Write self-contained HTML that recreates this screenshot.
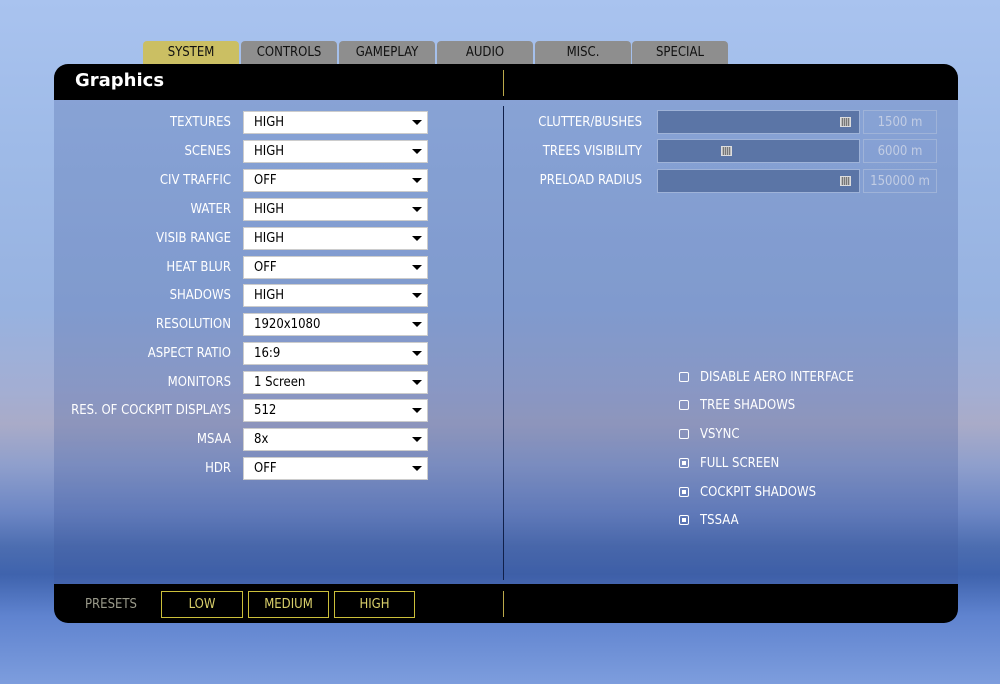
<!DOCTYPE html>
<html><head><meta charset="utf-8"><style>
*{margin:0;padding:0;box-sizing:border-box}
body{width:1000px;height:684px;overflow:hidden;position:relative;font-family:"DejaVu Sans Condensed","DejaVu Sans","Liberation Sans",sans-serif;font-stretch:condensed;font-size:13px;
background:linear-gradient(180deg,#a9c3ef 0%,#9fbbe8 20%,#97b2e0 45%,#a3aed3 57%,#a9abc8 62%,#8f9fcc 68%,#6c86c4 75%,#4c6db0 80%,#3f63ad 84%,#5f83cf 90%,#7d9ddd 100%)}
.tab{position:absolute;top:41px;height:23px;width:96px;background:#8e8e8e;border-radius:4px 4px 0 0;text-align:center;line-height:23px;color:#111;font-size:13px}
.tab.on{background:#cbbf63}
#panel{position:absolute;left:54px;top:64px;width:904px;height:559px;border-radius:14px;overflow:hidden}
.hdr{position:absolute;left:0;top:0;width:904px;height:36px;background:#000}
.ftr{position:absolute;left:0;top:520px;width:904px;height:39px;background:#000}
.body{position:absolute;left:0;top:36px;width:904px;height:484px;background:rgba(60,85,150,0.25)}
.div{position:absolute;left:449px;background:#111;width:1px}
.lbl{position:absolute;right:769px;color:#fff;text-align:right;white-space:nowrap}
.dd{position:absolute;left:243px;width:185px;height:23px;background:#fff;border:1px solid #ccc;color:#000;padding-left:10px;line-height:22px}
.dd:after{content:"";position:absolute;right:5px;top:8px;border-left:5px solid transparent;border-right:5px solid transparent;border-top:5px solid #000}
.sl{position:absolute;left:657px;width:203px;height:24px;background:#5b75a6;border:1px solid #9fb3d8}
.kn{position:absolute;top:6px;width:11px;height:10px;border:1px solid #ddd;background:repeating-linear-gradient(90deg,#bbb 0 1px,#777 1px 2px)}
.val{position:absolute;left:863px;width:74px;height:24px;border:1px solid #9fb3d8;color:#c2cde4;text-align:center;line-height:23px}
.rl{position:absolute;color:#fff;text-align:right;width:140px;left:502px}
.cb{position:absolute;left:679px;width:10px;height:10px;border:1px solid #fff;border-radius:2px}
.cb.on:after{content:"";position:absolute;left:2px;top:2px;width:4px;height:4px;background:#fff}
.ct{position:absolute;left:700px;color:#fff}
.pb{position:absolute;top:591px;height:27px;border:1px solid #cbbf3a;color:#d9cf6a;text-align:center;line-height:25px}
</style></head><body>
<div class="tab on" style="left:143px">SYSTEM</div>
<div class="tab" style="left:241px">CONTROLS</div>
<div class="tab" style="left:339px">GAMEPLAY</div>
<div class="tab" style="left:437px">AUDIO</div>
<div class="tab" style="left:535px">MISC.</div>
<div class="tab" style="left:632px">SPECIAL</div>
<div id="panel">
<div class="hdr"></div><div class="body"></div><div class="ftr"></div>
<div style="position:absolute;left:21px;top:6px;color:#fff;font-size:18px;font-weight:bold;font-family:'DejaVu Sans',sans-serif;font-stretch:normal">Graphics</div>
<div class="div" style="top:6px;height:26px;background:#bba94a"></div>
<div class="div" style="top:42px;height:474px;background:#10204a"></div>
<div class="div" style="top:527px;height:26px;background:#bba94a"></div>
</div>
<div class="lbl" style="top:115px">TEXTURES</div><div class="dd" style="top:111px">HIGH</div>
<div class="lbl" style="top:144px">SCENES</div><div class="dd" style="top:140px">HIGH</div>
<div class="lbl" style="top:173px">CIV TRAFFIC</div><div class="dd" style="top:169px">OFF</div>
<div class="lbl" style="top:202px">WATER</div><div class="dd" style="top:198px">HIGH</div>
<div class="lbl" style="top:231px">VISIB RANGE</div><div class="dd" style="top:227px">HIGH</div>
<div class="lbl" style="top:260px">HEAT BLUR</div><div class="dd" style="top:256px">OFF</div>
<div class="lbl" style="top:288px">SHADOWS</div><div class="dd" style="top:284px">HIGH</div>
<div class="lbl" style="top:317px">RESOLUTION</div><div class="dd" style="top:313px">1920x1080</div>
<div class="lbl" style="top:346px">ASPECT RATIO</div><div class="dd" style="top:342px">16:9</div>
<div class="lbl" style="top:375px">MONITORS</div><div class="dd" style="top:371px">1 Screen</div>
<div class="lbl" style="top:403px">RES. OF COCKPIT DISPLAYS</div><div class="dd" style="top:399px">512</div>
<div class="lbl" style="top:432px">MSAA</div><div class="dd" style="top:428px">8x</div>
<div class="lbl" style="top:461px">HDR</div><div class="dd" style="top:457px">OFF</div>

<div class="rl" style="top:115px">CLUTTER/BUSHES</div><div class="sl" style="top:110px"><div class="kn" style="left:182px"></div></div><div class="val" style="top:110px">1500 m</div>
<div class="rl" style="top:144px">TREES VISIBILITY</div><div class="sl" style="top:139px"><div class="kn" style="left:63px"></div></div><div class="val" style="top:139px">6000 m</div>
<div class="rl" style="top:173px">PRELOAD RADIUS</div><div class="sl" style="top:169px"><div class="kn" style="left:182px"></div></div><div class="val" style="top:169px">150000 m</div>

<div class="cb" style="top:372px"></div><div class="ct" style="top:370px">DISABLE AERO INTERFACE</div>
<div class="cb" style="top:400px"></div><div class="ct" style="top:398px">TREE SHADOWS</div>
<div class="cb" style="top:429px"></div><div class="ct" style="top:427px">VSYNC</div>
<div class="cb on" style="top:458px"></div><div class="ct" style="top:456px">FULL SCREEN</div>
<div class="cb on" style="top:487px"></div><div class="ct" style="top:485px">COCKPIT SHADOWS</div>
<div class="cb on" style="top:515px"></div><div class="ct" style="top:513px">TSSAA</div>

<div style="position:absolute;left:85px;top:597px;color:#9a9a8a">PRESETS</div>
<div class="pb" style="left:161px;width:82px">LOW</div>
<div class="pb" style="left:248px;width:81px">MEDIUM</div>
<div class="pb" style="left:334px;width:81px">HIGH</div>
</body></html>
